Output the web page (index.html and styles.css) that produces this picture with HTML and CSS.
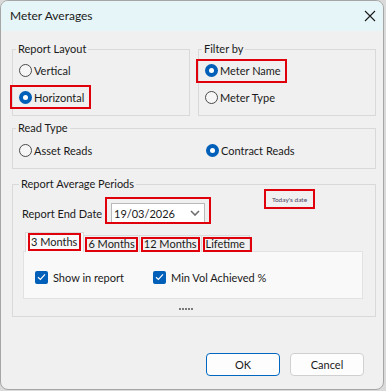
FILE: index.html
```html
<!DOCTYPE html>
<html>
<head>
<meta charset="utf-8">
<link rel="stylesheet" href="styles.css">
</head>
<body>
<div class="dialog">
  <div class="titlebar">
    <span class="title">Meter Averages</span>
    <svg class="close" width="12" height="12" viewBox="0 0 12 12"><path d="M1 1 L11 11 M11 1 L1 11" stroke="#1a1a1a" stroke-width="1.1" fill="none"/></svg>
  </div>
  <div class="content">
    <div class="row-top">
      <fieldset class="group group-top">
        <legend class="legend">Report Layout</legend>
        <div class="opt"><span class="radio"></span><span>Vertical</span></div>
        <div class="opt opt-second"><span class="radio checked"></span><span>Horizontal</span><span class="mark mark-horizontal"></span></div>
      </fieldset>
      <fieldset class="group group-top">
        <legend class="legend">Filter by</legend>
        <div class="opt"><span class="radio checked"></span><span>Meter Name</span><span class="mark mark-metername"></span></div>
        <div class="opt opt-second"><span class="radio"></span><span>Meter Type</span></div>
      </fieldset>
    </div>
    <fieldset class="group group-read">
      <legend class="legend">Read Type</legend>
      <div class="read-row">
        <div class="opt"><span class="radio"></span><span>Asset Reads</span></div>
        <div class="opt"><span class="radio checked"></span><span>Contract Reads</span></div>
      </div>
    </fieldset>
    <fieldset class="group group-periods">
      <legend class="legend">Report Average Periods</legend>
      <div class="date-row">
        <span class="date-label">Report End Date</span>
        <div class="combo">
          <span>19/03/2026</span>
          <svg class="chev" width="10" height="6" viewBox="0 0 10 6"><path d="M1 1 L5 5 L9 1" stroke="#6e6e6e" stroke-width="1.6" fill="none"/></svg>
          <span class="mark mark-date"></span>
        </div>
        <div class="note">Today's date</div>
      </div>
      <div class="tabs">
        <div class="tab tab-active">3 Months<span class="mark mark-tab"></span></div>
        <div class="tab">6 Months<span class="mark mark-tab"></span></div>
        <div class="tab">12 Months<span class="mark mark-tab"></span></div>
        <div class="tab">Lifetime<span class="mark mark-tab mark-tab-last"></span></div>
      </div>
      <div class="panel">
        <div class="check-item"><span class="check"><svg width="9" height="8" viewBox="0 0 9 8"><path d="M1 4.2 L3.4 6.4 L8 1.4" stroke="#fff" stroke-width="1.2" fill="none"/></svg></span><span>Show in report</span></div>
        <div class="check-item"><span class="check"><svg width="9" height="8" viewBox="0 0 9 8"><path d="M1 4.2 L3.4 6.4 L8 1.4" stroke="#fff" stroke-width="1.2" fill="none"/></svg></span><span>Min Vol Achieved %</span></div>
      </div>
      <div class="grip"><span></span><span></span><span></span><span></span><span></span></div>
    </fieldset>
    <div class="buttons">
      <button class="btn btn-default">OK</button>
      <button class="btn">Cancel</button>
    </div>
  </div>
</div>
</body>
</html>
```

FILE: styles.css
```css
* { box-sizing: border-box; }
html, body { margin: 0; padding: 0; }
body {
  width: 386px;
  height: 391px;
  overflow: hidden;
  background: #dadada;
  font-family: "Lato", "Noto Sans", sans-serif;
  font-size: 11px;
  color: #1a1a1a;
}
.dialog {
  width: 384px;
  height: 390px;
  background: #f0f0f0;
  border: 1px solid #a6a6a6;
  border-radius: 8px;
  overflow: hidden;
  display: flex;
  flex-direction: column;
}
.titlebar {
  flex: none;
  height: 30px;
  background: #e6f5f7;
  display: flex;
  align-items: center;
  justify-content: space-between;
  padding: 0 7px 0 9px;
}
.title { font-size: 12px; line-height: 16px; }
.close { display: block; }
.content {
  flex: 1;
  display: flex;
  flex-direction: column;
  padding: 10px 7px 13px 11px;
}
.row-top {
  display: grid;
  grid-template-columns: 178px 178px;
  column-gap: 8px;
}
.group {
  margin: 0;
  min-width: 0;
  border: 1px solid #d9d9d9;
  padding: 1px 5px 6px 6px;
}
.legend {
  padding: 0 2px;
  margin-left: -3px;
  line-height: 16px;
  font-size: 11px;
}
.opt {
  position: relative;
  display: flex;
  align-items: center;
  gap: 2px;
  height: 24px;
  white-space: nowrap;
}
.opt-second { margin-top: 3px; }
.radio {
  flex: none;
  width: 13px;
  height: 13px;
  border-radius: 50%;
  border: 1px solid #4a4a4a;
  background: #f6f6f6;
  position: relative;
}
.radio.checked {
  border: none;
  background: #005fb8;
}
.radio.checked::after {
  content: "";
  position: absolute;
  left: 4px;
  top: 4px;
  width: 5px;
  height: 5px;
  border-radius: 50%;
  background: #fff;
}
.mark {
  position: absolute;
  border: 2px solid #e0000b;
  pointer-events: none;
}
.mark-horizontal { left: -9px; top: 0; width: 81px; height: 24px; }
.mark-metername { left: -9px; top: 1px; width: 91px; height: 24px; }
.group-read {
  margin-top: 4px;
  padding-top: 2px;
}
.read-row {
  display: grid;
  grid-template-columns: 187px 1fr;
}
.group-periods {
  margin-top: 7px;
  padding: 11px 12px 6px 9px;
}
.group-periods .legend { margin-left: -3px; }
.date-row {
  position: relative;
  display: flex;
  align-items: center;
  height: 20px;
}
.date-label { width: 89px; white-space: nowrap; }
.combo {
  position: relative;
  width: 94px;
  height: 20px;
  background: #fff;
  border: 1px solid #b9b9b9;
  display: flex;
  align-items: center;
  justify-content: space-between;
  padding: 0 4px 0 2px;
  font-size: 11px;
}
.chev { display: block; }
.mark-date { left: -7px; top: -7px; width: 106px; height: 27px; }
.note {
  position: absolute;
  left: 242px;
  top: -14px;
  width: 51px;
  height: 20px;
  border: 2px solid #e0000b;
  font-size: 6.5px;
  color: #4d4363;
  display: flex;
  align-items: center;
  justify-content: center;
}
.tabs {
  display: flex;
  align-items: flex-end;
  margin-top: 9px;
  padding-left: 3px;
  height: 20px;
  position: relative;
  z-index: 1;
}
.tab {
  position: relative;
  height: 17px;
  line-height: 16px;
  padding: 0 4px 0 4px;
  border: 1px solid #dadada;
  border-bottom: none;
  border-left: none;
  background: #f0f0f0;
  white-space: nowrap;
  font-size: 11px;
}
.tab-active {
  height: 20px;
  background: #f9f9f9;
  border: 1px solid #dadada;
  border-bottom: none;
  line-height: 17px;
  padding: 0 6px 0 5px;
}
.mark-tab { left: 1px; right: 1px; top: 1px; bottom: 0; }
.tab-active .mark-tab { left: 2px; right: 2px; top: 0; bottom: 1px; }
.mark-tab-last { right: -3px; }
.panel {
  margin-top: -1px;
  margin-left: 1px;
  height: 48px;
  background: #f9f9f9;
  border: 1px solid #e2e2e2;
  display: grid;
  grid-template-columns: 118px 1fr;
  padding: 18px 0 0 11px;
}
.check-item {
  display: flex;
  align-items: center;
  gap: 5px;
  height: 14px;
  white-space: nowrap;
}
.check {
  flex: none;
  width: 13px;
  height: 13px;
  border-radius: 2px;
  background: #005fb8;
  display: flex;
  align-items: center;
  justify-content: center;
}
.check svg { display: block; }
.grip {
  display: flex;
  justify-content: center;
  gap: 1px;
  margin-top: 9px;
  height: 2px;
  padding-right: 14px;
}
.grip span {
  width: 2px;
  height: 2px;
  background: #7a7a7a;
}
.buttons {
  margin-top: auto;
  display: flex;
  justify-content: flex-end;
  gap: 10px;
  padding-right: 12px;
}
.btn {
  width: 74px;
  height: 23px;
  font-family: inherit;
  font-size: 11px;
  color: #1a1a1a;
  background: #fdfdfd;
  border: 1px solid #d0d0d0;
  border-radius: 4px;
  padding: 0;
}
.btn-default { border-color: #0067c0; }
```
